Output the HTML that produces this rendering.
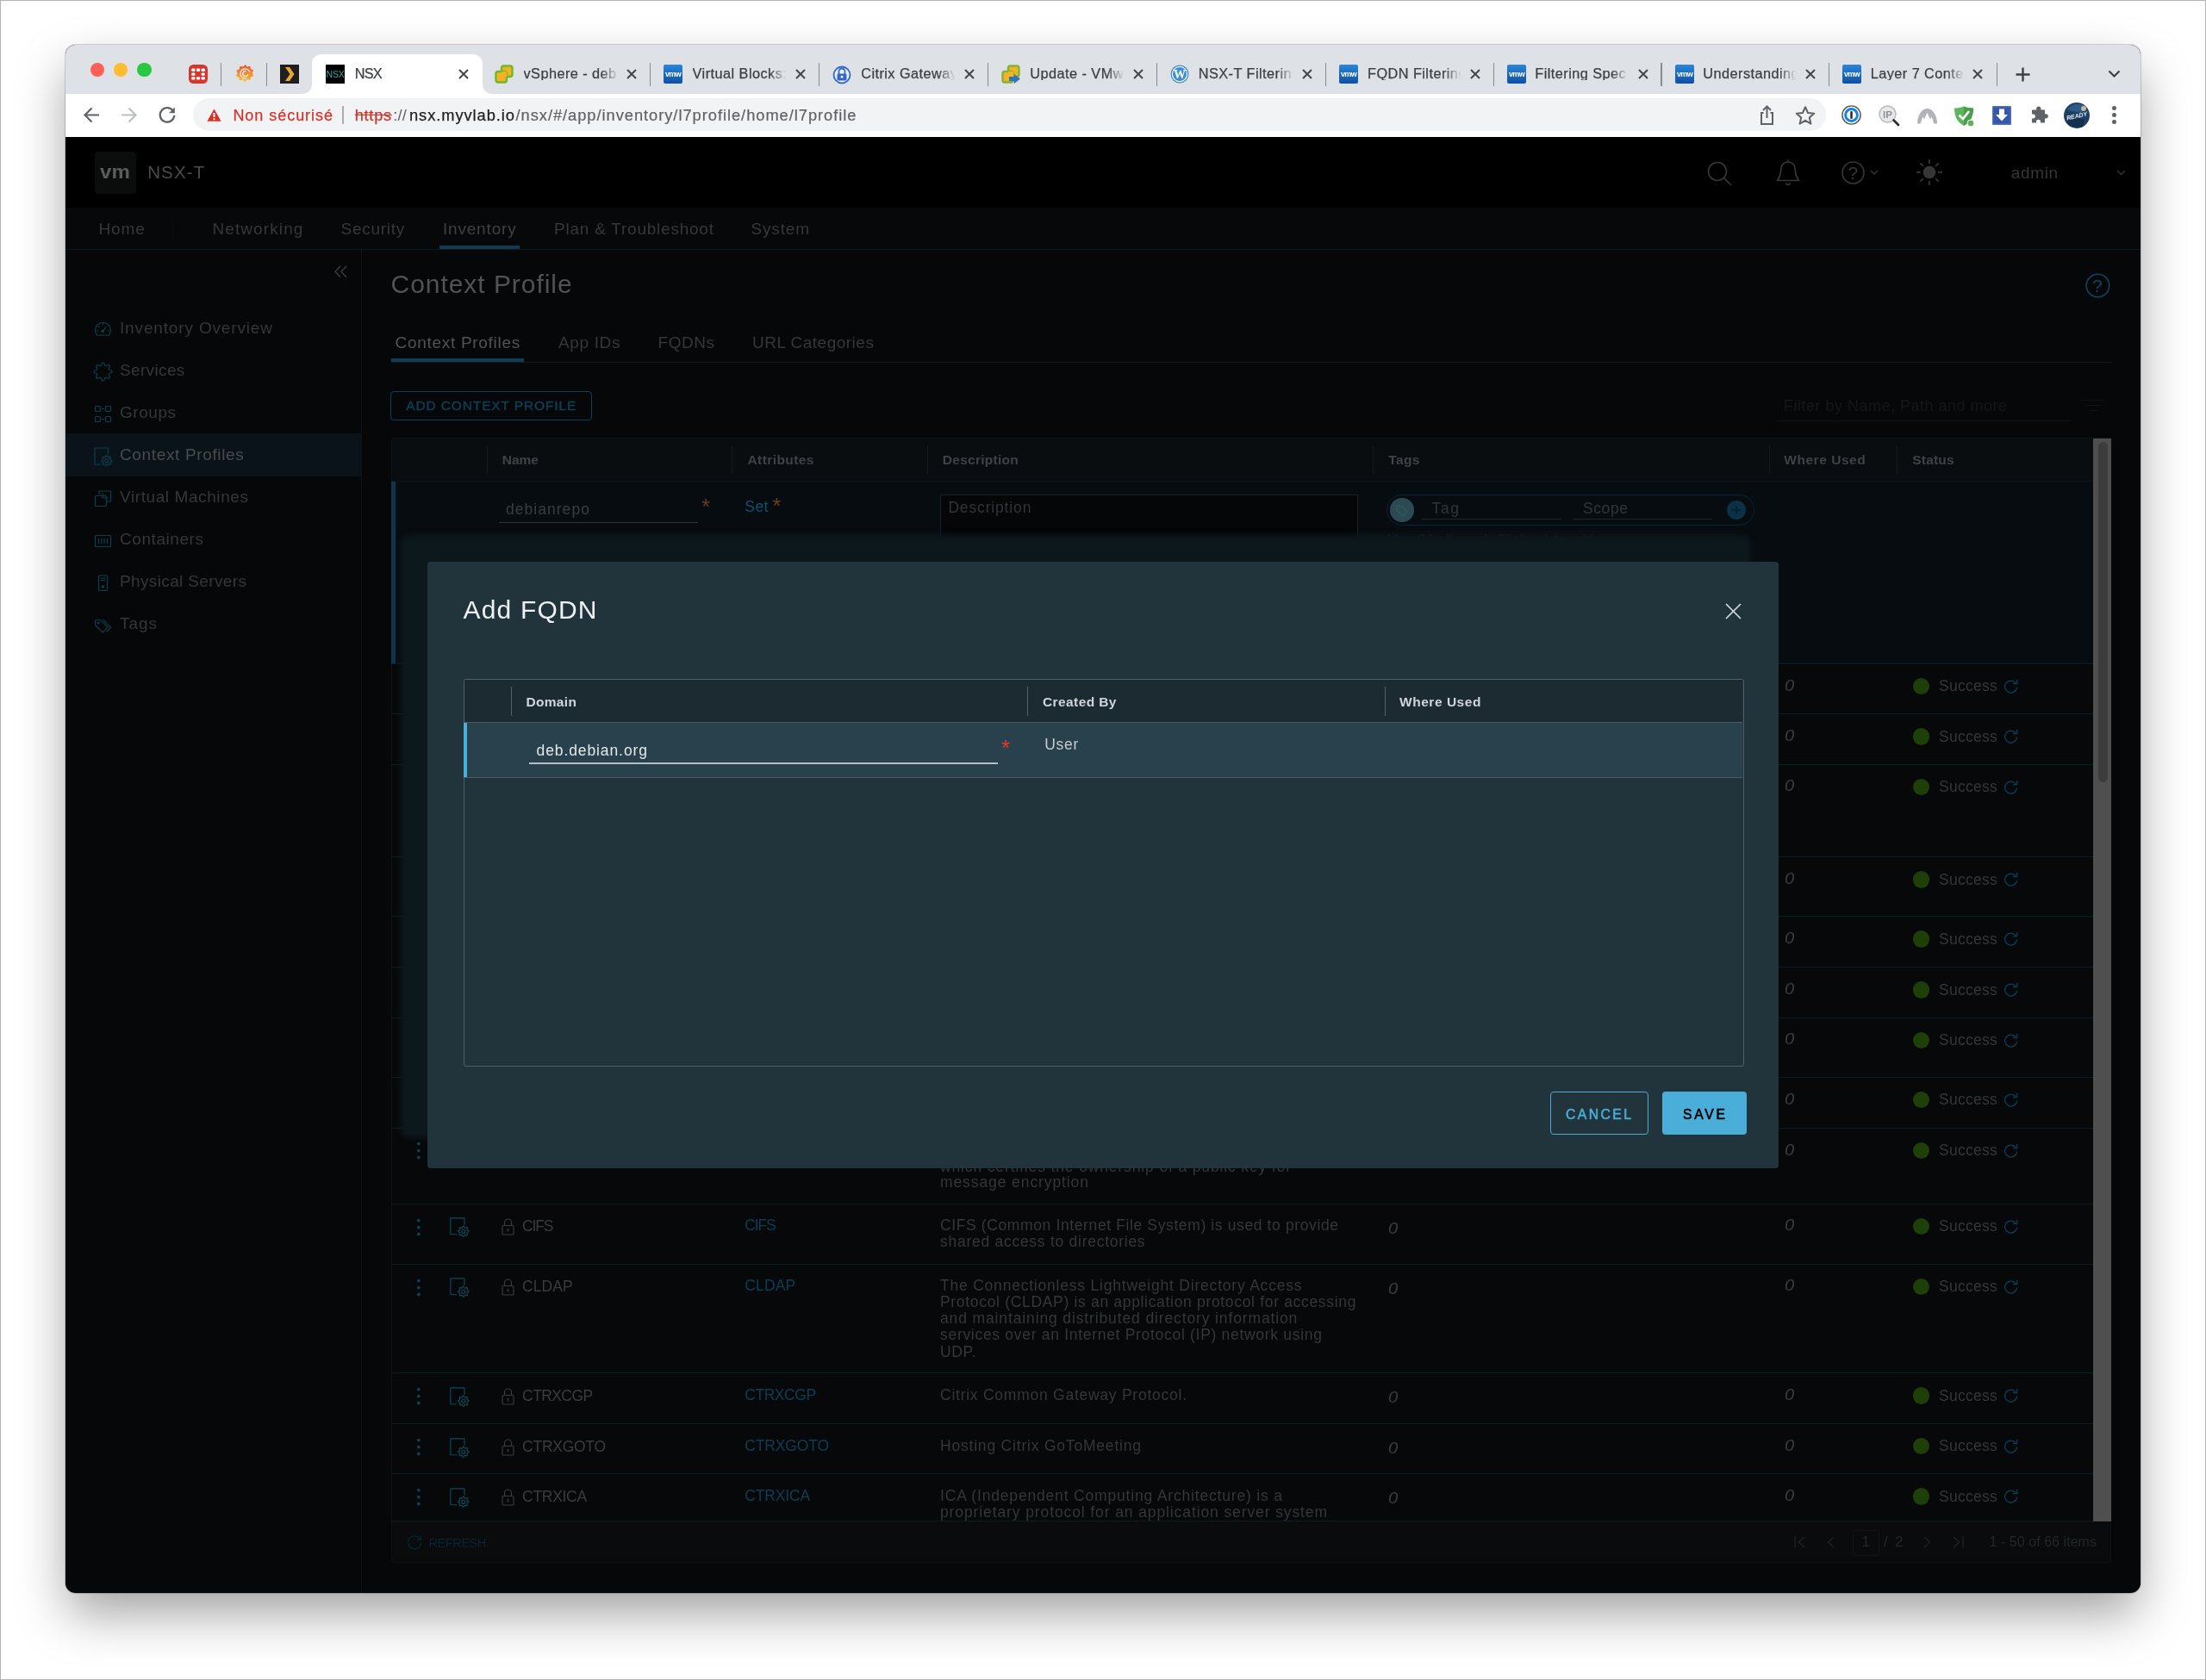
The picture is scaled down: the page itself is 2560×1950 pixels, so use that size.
<!DOCTYPE html><html lang="fr"><head><meta charset="utf-8"><title>NSX</title><style>

html,body{margin:0;padding:0}
body{width:2560px;height:1950px;position:relative;overflow:hidden;background:#fff;font-family:"Liberation Sans",sans-serif}
.a{position:absolute;box-sizing:border-box}
.t{position:absolute;white-space:pre;font-family:"Liberation Sans",sans-serif}
svg{overflow:visible}

</style></head><body>
<div class="a" style="left:0px;top:0px;width:2560px;height:1.3px;background:#b4b4b4;"></div>
<div class="a" style="left:0px;top:1948.6px;width:2560px;height:1.4px;background:#b4b4b4;"></div>
<div class="a" style="left:0px;top:0px;width:1.3px;height:1950px;background:#b4b4b4;"></div>
<div class="a" style="left:2558.5px;top:0px;width:1.5px;height:1950px;background:#b4b4b4;"></div>
<div class="a" style="left:76px;top:52px;width:2408px;height:1797px;border-radius:12px;box-shadow:0 0 0 1px rgba(0,0,0,.16),0 26px 58px -2px rgba(0,0,0,.37);background:#05080a"></div>
<div class="a" style="left:76px;top:52px;width:2408px;height:1797px;border-radius:12px;overflow:hidden">
<div class="a" style="left:-76px;top:-52px;width:2560px;height:1950px;will-change:transform">
<div class="a" style="left:76px;top:52px;width:2408px;height:57px;background:#dee1e6;"></div>
<svg class="a" style="left:350px;top:62px" width="222" height="47" viewBox="0 0 222 47"><path d="M0 47 C7 47 12 43 12 35 V12 C12 5 17 1 24 1 H198 C205 1 210 5 210 12 V35 C210 43 215 47 222 47 Z" fill="#fff"/></svg>
<div class="a" style="left:76px;top:109px;width:2408px;height:50px;background:#fff;"></div>
<div class="a" style="left:223.5px;top:114.3px;width:1895.5px;height:37.7px;background:#f1f3f4;border-radius:18.8px;"></div>
<div class="a" style="left:104.8px;top:72.5px;width:16.4px;height:16.4px;background:#fe5f57;border-radius:50%;"></div>
<div class="a" style="left:131.8px;top:72.5px;width:16.4px;height:16.4px;background:#febc2e;border-radius:50%;"></div>
<div class="a" style="left:159.3px;top:72.5px;width:16.4px;height:16.4px;background:#28c840;border-radius:50%;"></div>
<svg class="a" style="left:219px;top:74.5px;" width="22" height="22" viewBox="0 0 22 22"><rect x="0" y="0" width="22" height="22" rx="5.5" fill="#d8352c"/><g fill="#fff"><rect x="3.2" y="4.6" width="4.2" height="3.3" rx="1"/><rect x="8.9" y="4.6" width="4.2" height="3.3" rx="1"/><rect x="14.6" y="4.6" width="4.2" height="3.3" rx="1"/><rect x="3.2" y="9.4" width="4.2" height="3.3" rx="1"/><rect x="14.6" y="9.4" width="4.2" height="3.3" rx="1"/><rect x="3.2" y="14.2" width="4.2" height="3.3" rx="1"/><rect x="8.9" y="14.2" width="4.2" height="3.3" rx="1"/><rect x="14.6" y="14.2" width="4.2" height="3.3" rx="1"/></g></svg>
<div class="a" style="left:255.8px;top:73px;width:1.4px;height:26.5px;background:#878a8f;"></div>
<svg class="a" style="left:273px;top:74px;" width="22" height="22" viewBox="0 0 22 22"><linearGradient id="gg" x1="0" y1="0" x2="0" y2="1"><stop offset="0" stop-color="#ee4f2c"/><stop offset="1" stop-color="#fbc22b"/></linearGradient><path d="M11.5 1 L13.8 3.6 L17.2 2.6 L17.9 6.1 L21.2 7.6 L19.6 10.8 L21.4 14 L18 15.4 L17.2 19 L13.7 18.3 L11.2 21 L8.6 18.5 L5 19.3 L4.4 15.7 L1 14.2 L2.8 11 L1.2 7.7 L4.6 6.4 L5.5 2.8 L9 3.6 Z" fill="url(#gg)"/><path d="M16.6 9.2 A5.6 5.6 0 1 0 12.6 17 M12.2 8.6 A3 3 0 1 0 14.6 12.6" stroke="#e3e5ea" stroke-width="1.5" fill="none" stroke-linecap="round"/></svg>
<div class="a" style="left:308.8px;top:73px;width:1.4px;height:26.5px;background:#878a8f;"></div>
<svg class="a" style="left:325px;top:74.5px;" width="22" height="22" viewBox="0 0 22 22"><rect width="22" height="22" fill="#1f1f1f"/><path d="M6 3 H11 L16.5 11 L11 19 H6 L11.5 11 Z" fill="#eba72e"/></svg>
<svg class="a" style="left:378px;top:74.7px;" width="22" height="22" viewBox="0 0 22 22"><rect width="22" height="22" fill="#000"/><text x="11" y="15" font-family="Liberation Sans, sans-serif" font-size="10.5" fill="#3aa3ad" text-anchor="middle" letter-spacing="-0.2">NSX</text></svg>
<span class="t" style="left:411.70px;top:77.00px;font-size:16.3px;line-height:16.3px;color:#3c4043;letter-spacing:-0.742px;-webkit-text-stroke:0.25px #3c4043;">NSX</span>
<svg class="a" style="left:531.6px;top:79.9px;" width="12" height="12" viewBox="0 0 12 12"><path d="M1 1 L11 11 M11 1 L1 11" stroke="#44474a" stroke-width="2" fill="none"/></svg>
<svg class="a" style="left:574.1px;top:74.7px;" width="22" height="22" viewBox="0 0 22 22"><rect x="8" y="1.5" width="12.5" height="12.5" rx="2.5" fill="#f5b324" stroke="#72b62b" stroke-width="2.4"/><rect x="1.5" y="8" width="12.5" height="12.5" rx="2.5" fill="#f5b324" stroke="#72b62b" stroke-width="2.4"/><rect x="8" y="8" width="6" height="6" fill="#f5b324"/></svg>
<span class="t" style="left:607.50px;top:77.00px;font-size:16.3px;line-height:16.3px;color:#3c4043;letter-spacing:0.450px;-webkit-text-stroke:0.25px #3c4043;width:111.9px;overflow:hidden;-webkit-mask-image:linear-gradient(90deg,#000 0,#000 89.9px,transparent 109.9px);mask-image:linear-gradient(90deg,#000 0,#000 89.9px,transparent 109.9px);">vSphere - deb</span>
<svg class="a" style="left:727.4px;top:79.9px;" width="12" height="12" viewBox="0 0 12 12"><path d="M1 1 L11 11 M11 1 L1 11" stroke="#44474a" stroke-width="2" fill="none"/></svg>
<svg class="a" style="left:770.0px;top:74.7px;" width="22" height="22" viewBox="0 0 22 22"><linearGradient id="g770" x1="0" y1="0" x2="0" y2="1"><stop offset="0" stop-color="#2a86d8"/><stop offset="1" stop-color="#0d4fa6"/></linearGradient><rect width="22" height="22" rx="2" fill="url(#g770)"/><text x="11" y="14" font-family="Liberation Sans, sans-serif" font-size="9" font-weight="700" fill="#fff" text-anchor="middle" letter-spacing="-0.6">vmw</text></svg>
<span class="t" style="left:803.60px;top:77.00px;font-size:16.3px;line-height:16.3px;color:#3c4043;letter-spacing:0.450px;-webkit-text-stroke:0.25px #3c4043;width:111.4px;overflow:hidden;-webkit-mask-image:linear-gradient(90deg,#000 0,#000 89.4px,transparent 109.4px);mask-image:linear-gradient(90deg,#000 0,#000 89.4px,transparent 109.4px);">Virtual Blocks:</span>
<svg class="a" style="left:923.0px;top:79.9px;" width="12" height="12" viewBox="0 0 12 12"><path d="M1 1 L11 11 M11 1 L1 11" stroke="#44474a" stroke-width="2" fill="none"/></svg>
<svg class="a" style="left:966.0px;top:74.7px;" width="22" height="22" viewBox="0 0 22 22"><circle cx="11" cy="12" r="9.5" fill="#e9eefb" stroke="#3567c4" stroke-width="1.8"/><path d="M7.5 11 V8 A3.5 3.5 0 0 1 14.5 8 V11" stroke="#3567c4" stroke-width="1.8" fill="none"/><rect x="5.5" y="10.5" width="11" height="8" rx="1.5" fill="#3567c4"/><circle cx="11" cy="14.2" r="1.4" fill="#fff"/></svg>
<span class="t" style="left:999.20px;top:77.00px;font-size:16.3px;line-height:16.3px;color:#3c4043;letter-spacing:0.450px;-webkit-text-stroke:0.25px #3c4043;width:111.8px;overflow:hidden;-webkit-mask-image:linear-gradient(90deg,#000 0,#000 89.8px,transparent 109.8px);mask-image:linear-gradient(90deg,#000 0,#000 89.8px,transparent 109.8px);">Citrix Gateway</span>
<svg class="a" style="left:1119.0px;top:79.9px;" width="12" height="12" viewBox="0 0 12 12"><path d="M1 1 L11 11 M11 1 L1 11" stroke="#44474a" stroke-width="2" fill="none"/></svg>
<svg class="a" style="left:1162.1px;top:74.7px;" width="22" height="22" viewBox="0 0 22 22"><rect x="8" y="1.5" width="12.5" height="12.5" rx="2.5" fill="#f5b324" stroke="#7db53a" stroke-width="2.4"/><rect x="1.5" y="8" width="12.5" height="12.5" rx="2.5" fill="#f5b324" stroke="#7db53a" stroke-width="2.4"/><rect x="8" y="8" width="6" height="6" fill="#f5b324"/><path d="M9 14 H15 V11 L22 16.5 L15 22 V19 H9 Z" fill="#2f74c0"/></svg>
<span class="t" style="left:1195.30px;top:77.00px;font-size:16.3px;line-height:16.3px;color:#3c4043;letter-spacing:0.450px;-webkit-text-stroke:0.25px #3c4043;width:111.9px;overflow:hidden;-webkit-mask-image:linear-gradient(90deg,#000 0,#000 89.9px,transparent 109.9px);mask-image:linear-gradient(90deg,#000 0,#000 89.9px,transparent 109.9px);">Update - VMw</span>
<svg class="a" style="left:1315.2px;top:79.9px;" width="12" height="12" viewBox="0 0 12 12"><path d="M1 1 L11 11 M11 1 L1 11" stroke="#44474a" stroke-width="2" fill="none"/></svg>
<svg class="a" style="left:1358.2px;top:74.7px;" width="22" height="22" viewBox="0 0 22 22"><circle cx="11" cy="11" r="10.5" fill="#3d8fcb"/><circle cx="11" cy="11" r="8.6" fill="none" stroke="#fff" stroke-width="1.2"/><text x="11" y="16" font-family="Liberation Serif, serif" font-size="14" font-weight="700" fill="#fff" text-anchor="middle">W</text></svg>
<span class="t" style="left:1390.80px;top:77.00px;font-size:16.3px;line-height:16.3px;color:#3c4043;letter-spacing:0.450px;-webkit-text-stroke:0.25px #3c4043;width:112.5px;overflow:hidden;-webkit-mask-image:linear-gradient(90deg,#000 0,#000 90.5px,transparent 110.5px);mask-image:linear-gradient(90deg,#000 0,#000 90.5px,transparent 110.5px);">NSX-T Filterin</span>
<svg class="a" style="left:1511.3px;top:79.9px;" width="12" height="12" viewBox="0 0 12 12"><path d="M1 1 L11 11 M11 1 L1 11" stroke="#44474a" stroke-width="2" fill="none"/></svg>
<svg class="a" style="left:1554.3px;top:74.7px;" width="22" height="22" viewBox="0 0 22 22"><linearGradient id="g1554" x1="0" y1="0" x2="0" y2="1"><stop offset="0" stop-color="#2a86d8"/><stop offset="1" stop-color="#0d4fa6"/></linearGradient><rect width="22" height="22" rx="2" fill="url(#g1554)"/><text x="11" y="14" font-family="Liberation Sans, sans-serif" font-size="9" font-weight="700" fill="#fff" text-anchor="middle" letter-spacing="-0.6">vmw</text></svg>
<span class="t" style="left:1587.00px;top:77.00px;font-size:16.3px;line-height:16.3px;color:#3c4043;letter-spacing:0.450px;-webkit-text-stroke:0.25px #3c4043;width:110.7px;overflow:hidden;-webkit-mask-image:linear-gradient(90deg,#000 0,#000 88.7px,transparent 108.7px);mask-image:linear-gradient(90deg,#000 0,#000 88.7px,transparent 108.7px);">FQDN Filtering</span>
<svg class="a" style="left:1705.7px;top:79.9px;" width="12" height="12" viewBox="0 0 12 12"><path d="M1 1 L11 11 M11 1 L1 11" stroke="#44474a" stroke-width="2" fill="none"/></svg>
<svg class="a" style="left:1748.7px;top:74.7px;" width="22" height="22" viewBox="0 0 22 22"><linearGradient id="g1748" x1="0" y1="0" x2="0" y2="1"><stop offset="0" stop-color="#2a86d8"/><stop offset="1" stop-color="#0d4fa6"/></linearGradient><rect width="22" height="22" rx="2" fill="url(#g1748)"/><text x="11" y="14" font-family="Liberation Sans, sans-serif" font-size="9" font-weight="700" fill="#fff" text-anchor="middle" letter-spacing="-0.6">vmw</text></svg>
<span class="t" style="left:1781.30px;top:77.00px;font-size:16.3px;line-height:16.3px;color:#3c4043;letter-spacing:0.450px;-webkit-text-stroke:0.25px #3c4043;width:111.4px;overflow:hidden;-webkit-mask-image:linear-gradient(90deg,#000 0,#000 89.4px,transparent 109.4px);mask-image:linear-gradient(90deg,#000 0,#000 89.4px,transparent 109.4px);">Filtering Spec</span>
<svg class="a" style="left:1900.7px;top:79.9px;" width="12" height="12" viewBox="0 0 12 12"><path d="M1 1 L11 11 M11 1 L1 11" stroke="#44474a" stroke-width="2" fill="none"/></svg>
<svg class="a" style="left:1943.6px;top:74.7px;" width="22" height="22" viewBox="0 0 22 22"><linearGradient id="g1943" x1="0" y1="0" x2="0" y2="1"><stop offset="0" stop-color="#2a86d8"/><stop offset="1" stop-color="#0d4fa6"/></linearGradient><rect width="22" height="22" rx="2" fill="url(#g1943)"/><text x="11" y="14" font-family="Liberation Sans, sans-serif" font-size="9" font-weight="700" fill="#fff" text-anchor="middle" letter-spacing="-0.6">vmw</text></svg>
<span class="t" style="left:1976.30px;top:77.00px;font-size:16.3px;line-height:16.3px;color:#3c4043;letter-spacing:0.450px;-webkit-text-stroke:0.25px #3c4043;width:110.7px;overflow:hidden;-webkit-mask-image:linear-gradient(90deg,#000 0,#000 88.7px,transparent 108.7px);mask-image:linear-gradient(90deg,#000 0,#000 88.7px,transparent 108.7px);">Understanding</span>
<svg class="a" style="left:2095.0px;top:79.9px;" width="12" height="12" viewBox="0 0 12 12"><path d="M1 1 L11 11 M11 1 L1 11" stroke="#44474a" stroke-width="2" fill="none"/></svg>
<svg class="a" style="left:2138.0px;top:74.7px;" width="22" height="22" viewBox="0 0 22 22"><linearGradient id="g2138" x1="0" y1="0" x2="0" y2="1"><stop offset="0" stop-color="#2a86d8"/><stop offset="1" stop-color="#0d4fa6"/></linearGradient><rect width="22" height="22" rx="2" fill="url(#g2138)"/><text x="11" y="14" font-family="Liberation Sans, sans-serif" font-size="9" font-weight="700" fill="#fff" text-anchor="middle" letter-spacing="-0.6">vmw</text></svg>
<span class="t" style="left:2170.70px;top:77.00px;font-size:16.3px;line-height:16.3px;color:#3c4043;letter-spacing:0.450px;-webkit-text-stroke:0.25px #3c4043;width:110.7px;overflow:hidden;-webkit-mask-image:linear-gradient(90deg,#000 0,#000 88.7px,transparent 108.7px);mask-image:linear-gradient(90deg,#000 0,#000 88.7px,transparent 108.7px);">Layer 7 Conte</span>
<svg class="a" style="left:2289.4px;top:79.9px;" width="12" height="12" viewBox="0 0 12 12"><path d="M1 1 L11 11 M11 1 L1 11" stroke="#44474a" stroke-width="2" fill="none"/></svg>
<div class="a" style="left:753.8px;top:73px;width:1.4px;height:26.5px;background:#878a8f;"></div>
<div class="a" style="left:949.8px;top:73px;width:1.4px;height:26.5px;background:#878a8f;"></div>
<div class="a" style="left:1145.8999999999999px;top:73px;width:1.4px;height:26.5px;background:#878a8f;"></div>
<div class="a" style="left:1342.0px;top:73px;width:1.4px;height:26.5px;background:#878a8f;"></div>
<div class="a" style="left:1538.1px;top:73px;width:1.4px;height:26.5px;background:#878a8f;"></div>
<div class="a" style="left:1732.5px;top:73px;width:1.4px;height:26.5px;background:#878a8f;"></div>
<div class="a" style="left:1927.3999999999999px;top:73px;width:1.4px;height:26.5px;background:#878a8f;"></div>
<div class="a" style="left:2121.8px;top:73px;width:1.4px;height:26.5px;background:#878a8f;"></div>
<div class="a" style="left:2316.5px;top:73px;width:1.4px;height:26.5px;background:#878a8f;"></div>
<svg class="a" style="left:2339px;top:77.5px;" width="17" height="17" viewBox="0 0 17 17"><path d="M8.5 0.5 V16.5 M0.5 8.5 H16.5" stroke="#3c4043" stroke-width="2.4" fill="none"/></svg>
<svg class="a" style="left:2446px;top:81px;" width="15" height="10" viewBox="0 0 15 10"><path d="M1.5 1.5 L7.5 7.5 L13.5 1.5" stroke="#3c4043" stroke-width="2.2" fill="none"/></svg>
<svg class="a" style="left:96px;top:123px;" width="21" height="21" viewBox="0 0 21 21"><path d="M19 10.5 H3 M10.5 2.5 L2.5 10.5 L10.5 18.5" stroke="#5f6368" stroke-width="2.2" fill="none" stroke-linejoin="miter"/></svg>
<svg class="a" style="left:138.6px;top:123px;" width="21" height="21" viewBox="0 0 21 21"><path d="M2 10.5 H18 M10.5 2.5 L18.5 10.5 L10.5 18.5" stroke="#bcc0c4" stroke-width="2.2" fill="none"/></svg>
<svg class="a" style="left:182.5px;top:122.5px;" width="22" height="22" viewBox="0 0 22 22"><path d="M18.2 6.2 A8.3 8.3 0 1 0 19.3 11" stroke="#5f6368" stroke-width="2.3" fill="none"/><path d="M19.8 1.5 V8.3 H13 Z" fill="#5f6368"/></svg>
<svg class="a" style="left:240px;top:126px;" width="17" height="15" viewBox="0 0 17 15"><path d="M8.5 0.5 L16.6 14.7 H0.4 Z" fill="#d93025"/><path d="M8.5 5 V10" stroke="#fff" stroke-width="2"/><circle cx="8.5" cy="12.3" r="1.1" fill="#fff"/></svg>
<span class="t" style="left:270.40px;top:125.00px;font-size:18px;line-height:18px;color:#d3352b;letter-spacing:0.959px;-webkit-text-stroke:0.25px #d3352b;">Non sécurisé</span>
<div class="a" style="left:397.4px;top:122.5px;width:1.3px;height:21.5px;background:#a9adb2;"></div>
<span class="t" style="left:411.70px;top:125.00px;font-size:18.3px;line-height:18.3px;color:#d3352b;letter-spacing:0.715px;text-decoration:line-through;-webkit-text-stroke:0.25px #d3352b;">https</span>
<span class="t" style="left:456.30px;top:125.00px;font-size:18.3px;line-height:18.3px;color:#5f6368;letter-spacing:0.200px;">://</span>
<span class="t" style="left:475.00px;top:125.00px;font-size:18.3px;line-height:18.3px;color:#202124;letter-spacing:0.938px;-webkit-text-stroke:0.25px #202124;">nsx.myvlab.io</span>
<span class="t" style="left:598.50px;top:125.00px;font-size:18.3px;line-height:18.3px;color:#5f6368;letter-spacing:0.963px;-webkit-text-stroke:0.2px #5f6368;">/nsx/#/app/inventory/l7profile/home/l7profile</span>
<svg class="a" style="left:2041px;top:121px;" width="19" height="25" viewBox="0 0 19 25"><path d="M5.5 10 H3 V23 H16 V10 H13.5" stroke="#5f6368" stroke-width="2" fill="none"/><path d="M9.5 16 V3 M5 7 L9.5 2.5 L14 7" stroke="#5f6368" stroke-width="2" fill="none"/></svg>
<svg class="a" style="left:2083px;top:121.5px;" width="24" height="23" viewBox="0 0 24 23"><path d="M12 2.2 L15 9 L22.2 9.7 L16.8 14.5 L18.4 21.6 L12 17.8 L5.6 21.6 L7.2 14.5 L1.8 9.7 L9 9 Z" stroke="#5f6368" stroke-width="2" fill="none" stroke-linejoin="round"/></svg>
<svg class="a" style="left:2137px;top:122px;" width="23" height="23" viewBox="0 0 23 23"><circle cx="11.5" cy="11.5" r="10.6" fill="#fff" stroke="#4d5257" stroke-width="1.4"/><circle cx="11.5" cy="11.5" r="6.9" fill="#fff" stroke="#1883e0" stroke-width="3"/><rect x="10.2" y="7" width="2.6" height="9" rx="1.1" fill="#2a2e33"/></svg>
<svg class="a" style="left:2180px;top:122px;" width="26" height="26" viewBox="0 0 26 26"><circle cx="10.5" cy="10.5" r="9.5" fill="#e8e8ea" stroke="#b7b9bd" stroke-width="1.5"/><text x="10.5" y="15" font-family="Liberation Sans, sans-serif" font-size="11.5" font-weight="700" fill="#8d9095" text-anchor="middle">IP</text><path d="M17.5 17.5 L23 23" stroke="#2b2b2b" stroke-width="2.6" stroke-linecap="round"/></svg>
<svg class="a" style="left:2224px;top:124px;" width="25" height="20" viewBox="0 0 25 20"><path d="M1 19.5 A11.5 17.5 0 0 1 24 19.5 L20.3 19.5 L17.6 11.5 L15.9 14.2 L12.5 6.8 L9.1 14.2 L7.4 11.5 L4.7 19.5 Z" fill="#b1b4b9"/></svg>
<svg class="a" style="left:2267px;top:121.5px;" width="25" height="26" viewBox="0 0 25 26"><path d="M12 1.5 C15.5 3 19.5 3.6 23 3.6 C23 12 20.5 19.5 12 24 C3.5 19.5 1 12 1 3.6 C4.5 3.6 8.5 3 12 1.5 Z" fill="#5eb55f"/><path d="M12 1.5 C15.5 3 19.5 3.6 23 3.6 C23 12 20.5 19.5 12 24 Z" fill="#46a049"/><path d="M6.5 11.5 L11 16 L18 7" stroke="#fff" stroke-width="2.6" fill="none"/><circle cx="20" cy="21" r="4" fill="#67ad5b" stroke="#fff" stroke-width="1"/></svg>
<svg class="a" style="left:2312px;top:122.5px;" width="22" height="22" viewBox="0 0 22 22"><rect width="22" height="22" rx="1.5" fill="#3558a8"/><rect x="0.8" y="0.8" width="20.4" height="20.4" fill="none" stroke="#5c7cc4" stroke-width="1"/><path d="M8 3.5 H14 V10 H18 L11 17.5 L4 10 H8 Z" fill="#fff"/></svg>
<svg class="a" style="left:2355px;top:122px;" width="23" height="23" viewBox="0 0 23 23"><path d="M8.2 4.2 A2.6 2.6 0 0 1 13.4 4.2 V5.6 H18 V10.2 H19.2 A2.6 2.6 0 0 1 19.2 15.4 H18 V20.6 H13 V19.2 A2.5 2.5 0 0 0 8 19.2 V20.6 H3 V15.6 H4.4 A2.5 2.5 0 0 0 4.4 10.6 H3 V5.6 H8.2 Z" fill="#5f6368"/></svg>
<svg class="a" style="left:2395px;top:118.5px;" width="30" height="30" viewBox="0 0 30 30"><circle cx="15" cy="15" r="15" fill="#1d3f63"/><path d="M4 8 A15 15 0 0 1 26 5 L20 12 L10 10 Z" fill="#2c5a86"/><path d="M3 22 L12 16 L24 20 L22 28 A15 15 0 0 1 3 22 Z" fill="#15304f"/><text x="15" y="18" font-family="Liberation Sans, sans-serif" font-size="7" font-style="italic" font-weight="700" fill="#dfe7f2" text-anchor="middle" transform="rotate(-12 15 15)">READY</text><circle cx="23" cy="7" r="3" fill="#c9b59a"/></svg>
<div class="a" style="left:2451.0px;top:123.0px;width:4.6px;height:4.6px;background:#5f6368;border-radius:50%;"></div>
<div class="a" style="left:2451.0px;top:131.2px;width:4.6px;height:4.6px;background:#5f6368;border-radius:50%;"></div>
<div class="a" style="left:2451.0px;top:139.39999999999998px;width:4.6px;height:4.6px;background:#5f6368;border-radius:50%;"></div>
<div class="a" style="left:76px;top:159px;width:2408px;height:1689px;background:#060709;"></div>
<div class="a" style="left:76px;top:159px;width:2408px;height:82px;background:#000;"></div>
<div class="a" style="left:109.5px;top:175.5px;width:48.5px;height:49px;background:#0b0d0c;border-radius:4px;"></div>
<span class="t" style="left:115.70px;top:189.00px;font-size:22.5px;line-height:22.5px;color:#5c5c5c;font-weight:700;transform:scaleX(1.07);transform-origin:left;">vm</span>
<span class="t" style="left:171.20px;top:190.00px;font-size:20.5px;line-height:20.5px;color:#4b4b4b;letter-spacing:1.125px;">NSX-T</span>
<svg class="a" style="left:1980px;top:186px;" width="32" height="32" viewBox="0 0 32 32"><circle cx="13" cy="13" r="10.5" stroke="#363636" stroke-width="1.7" fill="none"/><path d="M21 21 L29 29" stroke="#363636" stroke-width="1.7"/></svg>
<svg class="a" style="left:2061px;top:185px;" width="28" height="32" viewBox="0 0 28 32"><path d="M14 3 C8 3 5.5 8 5.5 14 C5.5 19 3.5 21.5 1.5 24.5 H26.5 C24.5 21.5 22.5 19 22.5 14 C22.5 8 20 3 14 3 Z" stroke="#363636" stroke-width="1.7" fill="none"/><path d="M14 0.5 V3 M11.5 27.5 A2.6 2.6 0 0 0 16.5 27.5" stroke="#363636" stroke-width="1.7" fill="none"/></svg>
<svg class="a" style="left:2137px;top:187px;" width="27" height="27" viewBox="0 0 27 27"><circle cx="13.5" cy="13.5" r="12.5" stroke="#363636" stroke-width="1.6" fill="none"/></svg>
<span class="t" style="left:2144.50px;top:190.00px;font-size:21px;line-height:21px;color:#363636;">?</span>
<svg class="a" style="left:2169.5px;top:197px;" width="10" height="6" viewBox="0 0 10 6"><path d="M1 1 L5 5 L9 1" stroke="#363636" stroke-width="1.4" fill="none"/></svg>
<svg class="a" style="left:2222.6px;top:184px;" width="32" height="32" viewBox="0 0 32 32"><circle cx="16" cy="16" r="7.3" fill="#363636"/><path d="M16 1 V6" stroke="#363636" stroke-width="1.8" transform="rotate(0 16 16)"/><path d="M16 1 V6" stroke="#363636" stroke-width="1.8" transform="rotate(45 16 16)"/><path d="M16 1 V6" stroke="#363636" stroke-width="1.8" transform="rotate(90 16 16)"/><path d="M16 1 V6" stroke="#363636" stroke-width="1.8" transform="rotate(135 16 16)"/><path d="M16 1 V6" stroke="#363636" stroke-width="1.8" transform="rotate(180 16 16)"/><path d="M16 1 V6" stroke="#363636" stroke-width="1.8" transform="rotate(225 16 16)"/><path d="M16 1 V6" stroke="#363636" stroke-width="1.8" transform="rotate(270 16 16)"/><path d="M16 1 V6" stroke="#363636" stroke-width="1.8" transform="rotate(315 16 16)"/></svg>
<span class="t" style="left:2333.70px;top:191.00px;font-size:19px;line-height:19px;color:#363636;letter-spacing:0.688px;">admin</span>
<svg class="a" style="left:2455.5px;top:197px;" width="11" height="6.5" viewBox="0 0 11 6.5"><path d="M1 1 L5.5 5.5 L10 1" stroke="#363636" stroke-width="1.4" fill="none"/></svg>
<div class="a" style="left:76px;top:240.8px;width:2408px;height:48.5px;background:#06080a;"></div>
<div class="a" style="left:76px;top:288.8px;width:2408px;height:1px;background:#0b1a20;"></div>
<span class="t" style="left:114.50px;top:256.00px;font-size:19px;line-height:19px;color:#34393c;letter-spacing:0.871px;">Home</span>
<div class="a" style="left:200px;top:256px;width:1px;height:22px;background:#0b0e10;"></div>
<span class="t" style="left:246.40px;top:256.00px;font-size:19px;line-height:19px;color:#34393c;letter-spacing:1.106px;">Networking</span>
<span class="t" style="left:395.60px;top:256.00px;font-size:19px;line-height:19px;color:#34393c;letter-spacing:0.708px;">Security</span>
<span class="t" style="left:513.90px;top:256.00px;font-size:19px;line-height:19px;color:#3d4245;letter-spacing:0.830px;">Inventory</span>
<div class="a" style="left:509.6px;top:284.8px;width:93.8px;height:4.6px;background:#12394f;"></div>
<span class="t" style="left:643.00px;top:256.00px;font-size:19px;line-height:19px;color:#34393c;letter-spacing:0.771px;">Plan &amp; Troubleshoot</span>
<span class="t" style="left:871.50px;top:256.00px;font-size:19px;line-height:19px;color:#34393c;letter-spacing:0.828px;">System</span>
<div class="a" style="left:419px;top:289.5px;width:1px;height:1559px;background:#0c1216;"></div>
<div class="a" style="left:76px;top:503.3px;width:343px;height:49.3px;background:#0a131a;"></div>
<svg class="a" style="left:387.6px;top:307.5px;" width="15" height="14.5" viewBox="0 0 15 14.5"><path d="M7 0.7 L1 7.2 L7 13.8 M14 0.7 L8 7.2 L14 13.8" stroke="#3a4044" stroke-width="1.3" fill="none"/></svg>
<span class="t" style="left:139.00px;top:371.00px;font-size:19px;line-height:19px;color:#33383b;letter-spacing:0.846px;">Inventory Overview</span>
<span class="t" style="left:139.00px;top:420.00px;font-size:19px;line-height:19px;color:#33383b;letter-spacing:0.349px;">Services</span>
<span class="t" style="left:139.00px;top:469.00px;font-size:19px;line-height:19px;color:#33383b;letter-spacing:0.537px;">Groups</span>
<span class="t" style="left:139.00px;top:518.00px;font-size:19px;line-height:19px;color:#484c4f;letter-spacing:0.645px;">Context Profiles</span>
<span class="t" style="left:139.00px;top:567.00px;font-size:19px;line-height:19px;color:#33383b;letter-spacing:0.593px;">Virtual Machines</span>
<span class="t" style="left:139.00px;top:616.00px;font-size:19px;line-height:19px;color:#33383b;letter-spacing:0.568px;">Containers</span>
<span class="t" style="left:139.00px;top:665.00px;font-size:19px;line-height:19px;color:#33383b;letter-spacing:0.367px;">Physical Servers</span>
<span class="t" style="left:139.00px;top:714.00px;font-size:19px;line-height:19px;color:#33383b;letter-spacing:0.953px;">Tags</span>
<svg class="a" style="left:109px;top:372.0px;" width="21" height="21" viewBox="0 0 21 21"><g stroke="#0e3e4b" stroke-width="1.2" fill="none"><path d="M3.5 17 A9 9 0 1 1 17.5 17 Z"/><path d="M10.5 12 L14.5 7"/><circle cx="10.2" cy="12.3" r="1.3" fill="#0e3e4b"/><path d="M10.5 3 V5 M3 12 H5 M16 12 H18 M5 6.5 L6.3 7.8"/></g></svg>
<svg class="a" style="left:109px;top:421.0px;" width="21" height="21" viewBox="0 0 21 21"><g stroke="#0e3e4b" stroke-width="1.2" fill="none"><path stroke-linejoin="round" d="M20.85 9.48 L20.85 11.52 L17.77 12.71 L17.20 14.08 L18.54 17.10 L17.10 18.54 L14.08 17.20 L12.71 17.77 L11.52 20.85 L9.48 20.85 L8.29 17.77 L6.92 17.20 L3.90 18.54 L2.46 17.10 L3.80 14.08 L3.23 12.71 L0.15 11.52 L0.15 9.48 L3.23 8.29 L3.80 6.92 L2.46 3.90 L3.90 2.46 L6.92 3.80 L8.29 3.23 L9.48 0.15 L11.52 0.15 L12.71 3.23 L14.08 3.80 L17.10 2.46 L18.54 3.90 L17.20 6.92 L17.77 8.29 Z"/></g></svg>
<svg class="a" style="left:109px;top:470.0px;" width="21" height="21" viewBox="0 0 21 21"><g stroke="#0e3e4b" stroke-width="1.2" fill="none"><rect x="1.5" y="1.5" width="6" height="6" rx="1"/><rect x="13.5" y="1.5" width="6" height="6" rx="1"/><rect x="1.5" y="13.5" width="6" height="6" rx="1"/><rect x="13.5" y="13.5" width="6" height="6" rx="1"/><path d="M9 4.5 H12 M9 16.5 H12"/></g></svg>
<svg class="a" style="left:109px;top:519.0px;" width="21" height="21" viewBox="0 0 21 21"><g stroke="#0e3e4b" stroke-width="1.2" fill="none"><path d="M16.5 8 V1 H1 V20 H8"/><path stroke-linejoin="round" d="M20.77 15.21 L20.77 16.39 L19.01 17.08 L18.68 17.87 L19.44 19.61 L18.61 20.44 L16.87 19.68 L16.08 20.01 L15.39 21.77 L14.21 21.77 L13.52 20.01 L12.73 19.68 L10.99 20.44 L10.16 19.61 L10.92 17.87 L10.59 17.08 L8.83 16.39 L8.83 15.21 L10.59 14.52 L10.92 13.73 L10.16 11.99 L10.99 11.16 L12.73 11.92 L13.52 11.59 L14.21 9.83 L15.39 9.83 L16.08 11.59 L16.87 11.92 L18.61 11.16 L19.44 11.99 L18.68 13.73 L19.01 14.52 Z"/><circle cx="14.8" cy="15.8" r="1.9"/></g></svg>
<svg class="a" style="left:109px;top:568.0px;" width="21" height="21" viewBox="0 0 21 21"><g stroke="#0e3e4b" stroke-width="1.2" fill="none"><path d="M6 6 V2 H19.5 V14 H15"/><rect x="1.5" y="7.5" width="13" height="12" rx="1"/><path d="M10 4.5 V10 H17"/></g></svg>
<svg class="a" style="left:109px;top:617.0px;" width="21" height="21" viewBox="0 0 21 21"><g stroke="#0e3e4b" stroke-width="1.2" fill="none"><rect x="1.5" y="4.5" width="18" height="13" rx="1"/><path d="M5.5 8 V14 M8.8 8 V14 M12.1 8 V14 M15.4 8 V14"/></g></svg>
<svg class="a" style="left:109px;top:666.0px;" width="21" height="21" viewBox="0 0 21 21"><g stroke="#0e3e4b" stroke-width="1.2" fill="none"><rect x="5.5" y="2" width="10" height="17.5" rx="1"/><path d="M7.5 5 H13.5 M7.5 7.5 H13.5"/><circle cx="10.5" cy="15" r="1.1" fill="#0e3e4b"/></g></svg>
<svg class="a" style="left:109px;top:715.0px;" width="21" height="21" viewBox="0 0 21 21"><g stroke="#0e3e4b" stroke-width="1.2" fill="none"><path d="M1.5 5 V10.5 L10 19 L16 13 L7.5 4.5 Z"/><path d="M10.5 4.5 L19.5 13.5 L14.5 18.5"/><circle cx="5" cy="8" r="1" fill="#0e3e4b"/></g></svg>
<span class="t" style="left:453.60px;top:315.00px;font-size:30px;line-height:30px;color:#4f5355;letter-spacing:0.945px;">Context Profile</span>
<svg class="a" style="left:2420px;top:317px;" width="29" height="29" viewBox="0 0 29 29"><circle cx="14.5" cy="14.5" r="13.3" stroke="#0e4660" stroke-width="1.5" fill="none"/></svg>
<span class="t" style="left:2428.00px;top:321.00px;font-size:21px;line-height:21px;color:#0e4660;">?</span>
<div class="a" style="left:454px;top:419.5px;width:1997px;height:1px;background:#11171a;"></div>
<span class="t" style="left:458.50px;top:388.00px;font-size:19px;line-height:19px;color:#505457;letter-spacing:0.705px;">Context Profiles</span>
<div class="a" style="left:454.4px;top:415.6px;width:153.4px;height:4.6px;background:#123c54;"></div>
<span class="t" style="left:648.00px;top:388.00px;font-size:19px;line-height:19px;color:#33383b;letter-spacing:0.651px;">App IDs</span>
<span class="t" style="left:763.60px;top:388.00px;font-size:19px;line-height:19px;color:#33383b;letter-spacing:0.493px;">FQDNs</span>
<span class="t" style="left:873.00px;top:388.00px;font-size:19px;line-height:19px;color:#33383b;letter-spacing:0.495px;">URL Categories</span>
<div class="a" style="left:453px;top:454px;width:234px;height:33.5px;border:1.4px solid #0e3f58;border-radius:4px;"></div>
<span class="t" style="left:471.30px;top:463.00px;font-size:15.5px;line-height:15.5px;color:#0e4059;letter-spacing:0.865px;-webkit-text-stroke:0.35px #0e4059;">ADD CONTEXT PROFILE</span>
<span class="t" style="left:2070.00px;top:462.00px;font-size:18px;line-height:18px;color:#14181b;letter-spacing:0.496px;">Filter by Name, Path and more</span>
<div class="a" style="left:2062.5px;top:488px;width:340px;height:1px;background:#0e1417;"></div>
<div class="a" style="left:2415px;top:463.5px;width:29px;height:1px;background:#0f1315;"></div>
<div class="a" style="left:2420px;top:469.5px;width:19px;height:1px;background:#0f1315;"></div>
<div class="a" style="left:2425px;top:475.5px;width:9px;height:1px;background:#0f1315;"></div>
<div class="a" style="left:454px;top:508px;width:1996px;height:1307px;background:#060809;border:1px solid #0b1317;border-radius:3px;"></div>
<div class="a" style="left:455px;top:509px;width:1994px;height:50px;background:#0a0d0f;"></div>
<div class="a" style="left:455px;top:558px;width:1994px;height:1px;background:#0c151a;"></div>
<div class="a" style="left:564.9px;top:517px;width:1px;height:34px;background:#151a1d;"></div>
<div class="a" style="left:849.3px;top:517px;width:1px;height:34px;background:#151a1d;"></div>
<div class="a" style="left:1075.9px;top:517px;width:1px;height:34px;background:#151a1d;"></div>
<div class="a" style="left:1593.2px;top:517px;width:1px;height:34px;background:#151a1d;"></div>
<div class="a" style="left:2052.7px;top:517px;width:1px;height:34px;background:#151a1d;"></div>
<div class="a" style="left:2201.3px;top:517px;width:1px;height:34px;background:#151a1d;"></div>
<span class="t" style="left:582.80px;top:526.00px;font-size:15.5px;line-height:15.5px;color:#3d4347;font-weight:700;letter-spacing:-0.073px;">Name</span>
<span class="t" style="left:867.50px;top:526.00px;font-size:15.5px;line-height:15.5px;color:#3d4347;font-weight:700;letter-spacing:0.422px;">Attributes</span>
<span class="t" style="left:1093.80px;top:526.00px;font-size:15.5px;line-height:15.5px;color:#3d4347;font-weight:700;letter-spacing:0.273px;">Description</span>
<span class="t" style="left:1611.30px;top:526.00px;font-size:15.5px;line-height:15.5px;color:#3d4347;font-weight:700;letter-spacing:0.323px;">Tags</span>
<span class="t" style="left:2070.30px;top:526.00px;font-size:15.5px;line-height:15.5px;color:#3d4347;font-weight:700;letter-spacing:0.534px;">Where Used</span>
<span class="t" style="left:2219.30px;top:526.00px;font-size:15.5px;line-height:15.5px;color:#3d4347;font-weight:700;letter-spacing:0.185px;">Status</span>
<div class="a" style="left:455px;top:559px;width:1974px;height:211px;background:#070c10;"></div>
<div class="a" style="left:454px;top:558.5px;width:5px;height:212px;background:#10344a;"></div>
<span class="t" style="left:586.90px;top:583.00px;font-size:17.5px;line-height:17.5px;color:#3a3f42;letter-spacing:1.047px;">debianrepo</span>
<div class="a" style="left:578.7px;top:605.5px;width:231.7px;height:1.2px;background:#30363a;"></div>
<span class="t" style="left:814.30px;top:576.00px;font-size:25px;line-height:25px;color:#6a3d1c;">*</span>
<span class="t" style="left:864.30px;top:580.00px;font-size:17.5px;line-height:17.5px;color:#10506e;letter-spacing:0.459px;">Set</span>
<span class="t" style="left:896.50px;top:575.00px;font-size:25px;line-height:25px;color:#6a3d1c;">*</span>
<div class="a" style="left:1091px;top:574px;width:485.3px;height:75px;background:#040608;border:1px solid #1a2024;"></div>
<span class="t" style="left:1100.40px;top:581.00px;font-size:17.5px;line-height:17.5px;color:#31363a;letter-spacing:0.845px;">Description</span>
<div class="a" style="left:1609.4px;top:574px;width:427px;height:35.6px;border:1.1px solid #0b2533;border-radius:18px;"></div>
<div class="a" style="left:1613.4px;top:578.4px;width:27.2px;height:27.2px;background:#2b4a53;border-radius:50%;"></div>
<svg class="a" style="left:1619px;top:584px;" width="16" height="16" viewBox="0 0 16 16"><path d="M2 3 V8 L9 15 L14 10 L7 3 Z" stroke="#2b5f59" stroke-width="1.1" fill="none"/><circle cx="5" cy="6" r="0.9" fill="#2b5f59"/></svg>
<span class="t" style="left:1661.60px;top:582.00px;font-size:17.5px;line-height:17.5px;color:#31363a;letter-spacing:1.541px;">Tag</span>
<div class="a" style="left:1650px;top:601.5px;width:162px;height:1px;background:#20282d;"></div>
<span class="t" style="left:1837.00px;top:582.00px;font-size:17.5px;line-height:17.5px;color:#31363a;letter-spacing:0.594px;">Scope</span>
<div class="a" style="left:1826px;top:601.5px;width:161.4px;height:1px;background:#20282d;"></div>
<div class="a" style="left:2004px;top:581px;width:22px;height:22px;background:#0b3146;border-radius:50%;"></div>
<svg class="a" style="left:2009px;top:586px;" width="12" height="12" viewBox="0 0 12 12"><path d="M6 0.5 V11.5 M0.5 6 H11.5" stroke="#06212f" stroke-width="1.6"/></svg>
<span class="t" style="left:1609.40px;top:619.00px;font-size:16px;line-height:16px;color:#181e22;letter-spacing:0.389px;">Max 30 allowed. Click (+) to add.</span>
<div class="a" style="left:455px;top:770px;width:1974px;height:1.2px;background:#0d1d25;"></div>
<span class="t" style="left:2071.00px;top:787.00px;font-size:18px;line-height:18px;color:#3a3e41;font-style:italic;transform:scaleX(1.12);transform-origin:left;">0</span>
<div class="a" style="left:2219.5px;top:786.9px;width:19.6px;height:19.6px;background:#1f3f08;border-radius:50%;"></div>
<span class="t" style="left:2250.00px;top:788.00px;font-size:17.5px;line-height:17.5px;color:#33383b;letter-spacing:0.260px;">Success</span>
<svg class="a" style="left:2325px;top:788px;" width="17" height="17" viewBox="0 0 17 17"><path d="M14.2 4.8 A7 7 0 1 0 15.6 9.5" stroke="#0d3e55" stroke-width="1.25" fill="none"/><path d="M15.8 0.8 V5.6 H11" stroke="#0d3e55" stroke-width="1.25" fill="none"/></svg>
<div class="a" style="left:455px;top:828.3px;width:1974px;height:1.2px;background:#0d1d25;"></div>
<span class="t" style="left:2071.00px;top:845.00px;font-size:18px;line-height:18px;color:#3a3e41;font-style:italic;transform:scaleX(1.12);transform-origin:left;">0</span>
<div class="a" style="left:2219.5px;top:845.1999999999999px;width:19.6px;height:19.6px;background:#1f3f08;border-radius:50%;"></div>
<span class="t" style="left:2250.00px;top:847.00px;font-size:17.5px;line-height:17.5px;color:#33383b;letter-spacing:0.260px;">Success</span>
<svg class="a" style="left:2325px;top:846.3px;" width="17" height="17" viewBox="0 0 17 17"><path d="M14.2 4.8 A7 7 0 1 0 15.6 9.5" stroke="#0d3e55" stroke-width="1.25" fill="none"/><path d="M15.8 0.8 V5.6 H11" stroke="#0d3e55" stroke-width="1.25" fill="none"/></svg>
<div class="a" style="left:455px;top:886.7px;width:1974px;height:1.2px;background:#0d1d25;"></div>
<span class="t" style="left:2071.00px;top:903.00px;font-size:18px;line-height:18px;color:#3a3e41;font-style:italic;transform:scaleX(1.12);transform-origin:left;">0</span>
<div class="a" style="left:2219.5px;top:903.6px;width:19.6px;height:19.6px;background:#1f3f08;border-radius:50%;"></div>
<span class="t" style="left:2250.00px;top:905.00px;font-size:17.5px;line-height:17.5px;color:#33383b;letter-spacing:0.260px;">Success</span>
<svg class="a" style="left:2325px;top:904.7px;" width="17" height="17" viewBox="0 0 17 17"><path d="M14.2 4.8 A7 7 0 1 0 15.6 9.5" stroke="#0d3e55" stroke-width="1.25" fill="none"/><path d="M15.8 0.8 V5.6 H11" stroke="#0d3e55" stroke-width="1.25" fill="none"/></svg>
<div class="a" style="left:455px;top:994.3px;width:1974px;height:1.2px;background:#0d1d25;"></div>
<span class="t" style="left:2071.00px;top:1011.00px;font-size:18px;line-height:18px;color:#3a3e41;font-style:italic;transform:scaleX(1.12);transform-origin:left;">0</span>
<div class="a" style="left:2219.5px;top:1011.1999999999999px;width:19.6px;height:19.6px;background:#1f3f08;border-radius:50%;"></div>
<span class="t" style="left:2250.00px;top:1013.00px;font-size:17.5px;line-height:17.5px;color:#33383b;letter-spacing:0.260px;">Success</span>
<svg class="a" style="left:2325px;top:1012.3px;" width="17" height="17" viewBox="0 0 17 17"><path d="M14.2 4.8 A7 7 0 1 0 15.6 9.5" stroke="#0d3e55" stroke-width="1.25" fill="none"/><path d="M15.8 0.8 V5.6 H11" stroke="#0d3e55" stroke-width="1.25" fill="none"/></svg>
<div class="a" style="left:455px;top:1063.3px;width:1974px;height:1.2px;background:#0d1d25;"></div>
<span class="t" style="left:2071.00px;top:1080.00px;font-size:18px;line-height:18px;color:#3a3e41;font-style:italic;transform:scaleX(1.12);transform-origin:left;">0</span>
<div class="a" style="left:2219.5px;top:1080.2px;width:19.6px;height:19.6px;background:#1f3f08;border-radius:50%;"></div>
<span class="t" style="left:2250.00px;top:1082.00px;font-size:17.5px;line-height:17.5px;color:#33383b;letter-spacing:0.260px;">Success</span>
<svg class="a" style="left:2325px;top:1081.3px;" width="17" height="17" viewBox="0 0 17 17"><path d="M14.2 4.8 A7 7 0 1 0 15.6 9.5" stroke="#0d3e55" stroke-width="1.25" fill="none"/><path d="M15.8 0.8 V5.6 H11" stroke="#0d3e55" stroke-width="1.25" fill="none"/></svg>
<div class="a" style="left:455px;top:1122.3px;width:1974px;height:1.2px;background:#0d1d25;"></div>
<span class="t" style="left:2071.00px;top:1139.00px;font-size:18px;line-height:18px;color:#3a3e41;font-style:italic;transform:scaleX(1.12);transform-origin:left;">0</span>
<div class="a" style="left:2219.5px;top:1139.2px;width:19.6px;height:19.6px;background:#1f3f08;border-radius:50%;"></div>
<span class="t" style="left:2250.00px;top:1141.00px;font-size:17.5px;line-height:17.5px;color:#33383b;letter-spacing:0.260px;">Success</span>
<svg class="a" style="left:2325px;top:1140.3px;" width="17" height="17" viewBox="0 0 17 17"><path d="M14.2 4.8 A7 7 0 1 0 15.6 9.5" stroke="#0d3e55" stroke-width="1.25" fill="none"/><path d="M15.8 0.8 V5.6 H11" stroke="#0d3e55" stroke-width="1.25" fill="none"/></svg>
<div class="a" style="left:455px;top:1180.7px;width:1974px;height:1.2px;background:#0d1d25;"></div>
<span class="t" style="left:2071.00px;top:1197.00px;font-size:18px;line-height:18px;color:#3a3e41;font-style:italic;transform:scaleX(1.12);transform-origin:left;">0</span>
<div class="a" style="left:2219.5px;top:1197.6000000000001px;width:19.6px;height:19.6px;background:#1f3f08;border-radius:50%;"></div>
<span class="t" style="left:2250.00px;top:1199.00px;font-size:17.5px;line-height:17.5px;color:#33383b;letter-spacing:0.260px;">Success</span>
<svg class="a" style="left:2325px;top:1198.7px;" width="17" height="17" viewBox="0 0 17 17"><path d="M14.2 4.8 A7 7 0 1 0 15.6 9.5" stroke="#0d3e55" stroke-width="1.25" fill="none"/><path d="M15.8 0.8 V5.6 H11" stroke="#0d3e55" stroke-width="1.25" fill="none"/></svg>
<div class="a" style="left:455px;top:1250px;width:1974px;height:1.2px;background:#0d1d25;"></div>
<span class="t" style="left:2071.00px;top:1267.00px;font-size:18px;line-height:18px;color:#3a3e41;font-style:italic;transform:scaleX(1.12);transform-origin:left;">0</span>
<div class="a" style="left:2219.5px;top:1266.9px;width:19.6px;height:19.6px;background:#1f3f08;border-radius:50%;"></div>
<span class="t" style="left:2250.00px;top:1268.00px;font-size:17.5px;line-height:17.5px;color:#33383b;letter-spacing:0.260px;">Success</span>
<svg class="a" style="left:2325px;top:1268px;" width="17" height="17" viewBox="0 0 17 17"><path d="M14.2 4.8 A7 7 0 1 0 15.6 9.5" stroke="#0d3e55" stroke-width="1.25" fill="none"/><path d="M15.8 0.8 V5.6 H11" stroke="#0d3e55" stroke-width="1.25" fill="none"/></svg>
<div class="a" style="left:455px;top:1309px;width:1974px;height:1.2px;background:#0d1d25;"></div>
<span class="t" style="left:2071.00px;top:1326.00px;font-size:18px;line-height:18px;color:#3a3e41;font-style:italic;transform:scaleX(1.12);transform-origin:left;">0</span>
<div class="a" style="left:2219.5px;top:1325.9px;width:19.6px;height:19.6px;background:#1f3f08;border-radius:50%;"></div>
<span class="t" style="left:2250.00px;top:1327.00px;font-size:17.5px;line-height:17.5px;color:#33383b;letter-spacing:0.260px;">Success</span>
<svg class="a" style="left:2325px;top:1327px;" width="17" height="17" viewBox="0 0 17 17"><path d="M14.2 4.8 A7 7 0 1 0 15.6 9.5" stroke="#0d3e55" stroke-width="1.25" fill="none"/><path d="M15.8 0.8 V5.6 H11" stroke="#0d3e55" stroke-width="1.25" fill="none"/></svg>
<div class="a" style="left:455px;top:1396.7px;width:1974px;height:1.2px;background:#0d1d25;"></div>
<span class="t" style="left:2071.00px;top:1413.00px;font-size:18px;line-height:18px;color:#3a3e41;font-style:italic;transform:scaleX(1.12);transform-origin:left;">0</span>
<div class="a" style="left:2219.5px;top:1413.6000000000001px;width:19.6px;height:19.6px;background:#1f3f08;border-radius:50%;"></div>
<span class="t" style="left:2250.00px;top:1415.00px;font-size:17.5px;line-height:17.5px;color:#33383b;letter-spacing:0.260px;">Success</span>
<svg class="a" style="left:2325px;top:1414.7px;" width="17" height="17" viewBox="0 0 17 17"><path d="M14.2 4.8 A7 7 0 1 0 15.6 9.5" stroke="#0d3e55" stroke-width="1.25" fill="none"/><path d="M15.8 0.8 V5.6 H11" stroke="#0d3e55" stroke-width="1.25" fill="none"/></svg>
<div class="a" style="left:455px;top:1466.7px;width:1974px;height:1.2px;background:#0d1d25;"></div>
<span class="t" style="left:2071.00px;top:1483.00px;font-size:18px;line-height:18px;color:#3a3e41;font-style:italic;transform:scaleX(1.12);transform-origin:left;">0</span>
<div class="a" style="left:2219.5px;top:1483.6000000000001px;width:19.6px;height:19.6px;background:#1f3f08;border-radius:50%;"></div>
<span class="t" style="left:2250.00px;top:1485.00px;font-size:17.5px;line-height:17.5px;color:#33383b;letter-spacing:0.260px;">Success</span>
<svg class="a" style="left:2325px;top:1484.7px;" width="17" height="17" viewBox="0 0 17 17"><path d="M14.2 4.8 A7 7 0 1 0 15.6 9.5" stroke="#0d3e55" stroke-width="1.25" fill="none"/><path d="M15.8 0.8 V5.6 H11" stroke="#0d3e55" stroke-width="1.25" fill="none"/></svg>
<div class="a" style="left:455px;top:1593.3px;width:1974px;height:1.2px;background:#0d1d25;"></div>
<span class="t" style="left:2071.00px;top:1610.00px;font-size:18px;line-height:18px;color:#3a3e41;font-style:italic;transform:scaleX(1.12);transform-origin:left;">0</span>
<div class="a" style="left:2219.5px;top:1610.2px;width:19.6px;height:19.6px;background:#1f3f08;border-radius:50%;"></div>
<span class="t" style="left:2250.00px;top:1612.00px;font-size:17.5px;line-height:17.5px;color:#33383b;letter-spacing:0.260px;">Success</span>
<svg class="a" style="left:2325px;top:1611.3px;" width="17" height="17" viewBox="0 0 17 17"><path d="M14.2 4.8 A7 7 0 1 0 15.6 9.5" stroke="#0d3e55" stroke-width="1.25" fill="none"/><path d="M15.8 0.8 V5.6 H11" stroke="#0d3e55" stroke-width="1.25" fill="none"/></svg>
<div class="a" style="left:455px;top:1652px;width:1974px;height:1.2px;background:#0d1d25;"></div>
<span class="t" style="left:2071.00px;top:1669.00px;font-size:18px;line-height:18px;color:#3a3e41;font-style:italic;transform:scaleX(1.12);transform-origin:left;">0</span>
<div class="a" style="left:2219.5px;top:1668.9px;width:19.6px;height:19.6px;background:#1f3f08;border-radius:50%;"></div>
<span class="t" style="left:2250.00px;top:1670.00px;font-size:17.5px;line-height:17.5px;color:#33383b;letter-spacing:0.260px;">Success</span>
<svg class="a" style="left:2325px;top:1670px;" width="17" height="17" viewBox="0 0 17 17"><path d="M14.2 4.8 A7 7 0 1 0 15.6 9.5" stroke="#0d3e55" stroke-width="1.25" fill="none"/><path d="M15.8 0.8 V5.6 H11" stroke="#0d3e55" stroke-width="1.25" fill="none"/></svg>
<div class="a" style="left:455px;top:1710.3px;width:1974px;height:1.2px;background:#0d1d25;"></div>
<span class="t" style="left:2071.00px;top:1727.00px;font-size:18px;line-height:18px;color:#3a3e41;font-style:italic;transform:scaleX(1.12);transform-origin:left;">0</span>
<div class="a" style="left:2219.5px;top:1727.2px;width:19.6px;height:19.6px;background:#1f3f08;border-radius:50%;"></div>
<span class="t" style="left:2250.00px;top:1729.00px;font-size:17.5px;line-height:17.5px;color:#33383b;letter-spacing:0.260px;">Success</span>
<svg class="a" style="left:2325px;top:1728.3px;" width="17" height="17" viewBox="0 0 17 17"><path d="M14.2 4.8 A7 7 0 1 0 15.6 9.5" stroke="#0d3e55" stroke-width="1.25" fill="none"/><path d="M15.8 0.8 V5.6 H11" stroke="#0d3e55" stroke-width="1.25" fill="none"/></svg>
<div class="a" style="left:455px;top:1765.2px;width:1994px;height:1px;background:#0d1d25;"></div>
<svg class="a" style="left:480px;top:1323.2px;" width="12" height="26" viewBox="0 0 12 26"><g fill="#0e4058"><circle cx="5.8" cy="4.6" r="1.9"/><circle cx="5.8" cy="12.6" r="1.9"/><circle cx="5.8" cy="20.5" r="1.9"/></g></svg>
<span class="t" style="left:1091.00px;top:1346.00px;font-size:17.5px;line-height:17.5px;color:#33383b;letter-spacing:0.860px;">which certifies the ownership of a public key for</span>
<span class="t" style="left:1091.00px;top:1364.00px;font-size:17.5px;line-height:17.5px;color:#33383b;letter-spacing:0.904px;">message encryption</span>
<svg class="a" style="left:480px;top:1411.7px;" width="12" height="26" viewBox="0 0 12 26"><g fill="#0e4058"><circle cx="5.8" cy="4.6" r="1.9"/><circle cx="5.8" cy="12.6" r="1.9"/><circle cx="5.8" cy="20.5" r="1.9"/></g></svg>
<svg class="a" style="left:522px;top:1413.2px;" width="22" height="23" viewBox="0 0 22 23"><g stroke="#0e4a58" stroke-width="1.15" fill="none" stroke-linejoin="round"><path d="M17 8.5 V1.5 Q17 0.8 16.3 0.8 H1.5 Q0.8 0.8 0.8 1.5 V19 Q0.8 19.7 1.5 19.7 H8"/><path d="M21.87 15.60 L21.87 16.80 L20.20 17.54 L19.86 18.37 L20.52 20.07 L19.67 20.92 L17.97 20.26 L17.14 20.60 L16.40 22.27 L15.20 22.27 L14.46 20.60 L13.63 20.26 L11.93 20.92 L11.08 20.07 L11.74 18.37 L11.40 17.54 L9.73 16.80 L9.73 15.60 L11.40 14.86 L11.74 14.03 L11.08 12.33 L11.93 11.48 L13.63 12.14 L14.46 11.80 L15.20 10.13 L16.40 10.13 L17.14 11.80 L17.97 12.14 L19.67 11.48 L20.52 12.33 L19.86 14.03 L20.20 14.86 Z"/><circle cx="15.8" cy="16.2" r="2"/></g></svg>
<svg class="a" style="left:582px;top:1414.2px;" width="15" height="20" viewBox="0 0 15 20"><g stroke="#383d40" stroke-width="1.15" fill="none"><rect x="1" y="8.5" width="13" height="10.5" rx="1"/><path d="M3.5 8.5 V5 A4 4 0 0 1 11.5 5 V8.5"/></g><path d="M7.5 12 V15.5" stroke="#383d40" stroke-width="1.5"/></svg>
<span class="t" style="left:606.10px;top:1415.00px;font-size:17.5px;line-height:17.5px;color:#383d40;letter-spacing:-1.192px;">CIFS</span>
<span class="t" style="left:864.20px;top:1414.00px;font-size:17.5px;line-height:17.5px;color:#0d3e55;letter-spacing:-1.092px;">CIFS</span>
<span class="t" style="left:1091.00px;top:1414.00px;font-size:17.5px;line-height:17.5px;color:#33383b;letter-spacing:0.618px;">CIFS (Common Internet File System) is used to provide</span>
<span class="t" style="left:1091.00px;top:1433.00px;font-size:17.5px;line-height:17.5px;color:#33383b;letter-spacing:0.730px;">shared access to directories</span>
<span class="t" style="left:1610.70px;top:1417.00px;font-size:18px;line-height:18px;color:#3a3e41;font-style:italic;transform:scaleX(1.12);transform-origin:left;">0</span>
<svg class="a" style="left:480px;top:1481.7px;" width="12" height="26" viewBox="0 0 12 26"><g fill="#0e4058"><circle cx="5.8" cy="4.6" r="1.9"/><circle cx="5.8" cy="12.6" r="1.9"/><circle cx="5.8" cy="20.5" r="1.9"/></g></svg>
<svg class="a" style="left:522px;top:1483.2px;" width="22" height="23" viewBox="0 0 22 23"><g stroke="#0e4a58" stroke-width="1.15" fill="none" stroke-linejoin="round"><path d="M17 8.5 V1.5 Q17 0.8 16.3 0.8 H1.5 Q0.8 0.8 0.8 1.5 V19 Q0.8 19.7 1.5 19.7 H8"/><path d="M21.87 15.60 L21.87 16.80 L20.20 17.54 L19.86 18.37 L20.52 20.07 L19.67 20.92 L17.97 20.26 L17.14 20.60 L16.40 22.27 L15.20 22.27 L14.46 20.60 L13.63 20.26 L11.93 20.92 L11.08 20.07 L11.74 18.37 L11.40 17.54 L9.73 16.80 L9.73 15.60 L11.40 14.86 L11.74 14.03 L11.08 12.33 L11.93 11.48 L13.63 12.14 L14.46 11.80 L15.20 10.13 L16.40 10.13 L17.14 11.80 L17.97 12.14 L19.67 11.48 L20.52 12.33 L19.86 14.03 L20.20 14.86 Z"/><circle cx="15.8" cy="16.2" r="2"/></g></svg>
<svg class="a" style="left:582px;top:1484.2px;" width="15" height="20" viewBox="0 0 15 20"><g stroke="#383d40" stroke-width="1.15" fill="none"><rect x="1" y="8.5" width="13" height="10.5" rx="1"/><path d="M3.5 8.5 V5 A4 4 0 0 1 11.5 5 V8.5"/></g><path d="M7.5 12 V15.5" stroke="#383d40" stroke-width="1.5"/></svg>
<span class="t" style="left:606.10px;top:1485.00px;font-size:17.5px;line-height:17.5px;color:#383d40;letter-spacing:0.035px;">CLDAP</span>
<span class="t" style="left:864.20px;top:1484.00px;font-size:17.5px;line-height:17.5px;color:#0d3e55;letter-spacing:0.160px;">CLDAP</span>
<span class="t" style="left:1091.00px;top:1484.00px;font-size:17.5px;line-height:17.5px;color:#33383b;letter-spacing:0.788px;">The Connectionless Lightweight Directory Access</span>
<span class="t" style="left:1091.00px;top:1503.00px;font-size:17.5px;line-height:17.5px;color:#33383b;letter-spacing:0.677px;">Protocol (CLDAP) is an application protocol for accessing</span>
<span class="t" style="left:1091.00px;top:1522.00px;font-size:17.5px;line-height:17.5px;color:#33383b;letter-spacing:0.870px;">and maintaining distributed directory information</span>
<span class="t" style="left:1091.00px;top:1541.00px;font-size:17.5px;line-height:17.5px;color:#33383b;letter-spacing:0.700px;">services over an Internet Protocol (IP) network using</span>
<span class="t" style="left:1091.00px;top:1561.00px;font-size:17.5px;line-height:17.5px;color:#33383b;letter-spacing:0.646px;">UDP.</span>
<span class="t" style="left:1610.70px;top:1487.00px;font-size:18px;line-height:18px;color:#3a3e41;font-style:italic;transform:scaleX(1.12);transform-origin:left;">0</span>
<svg class="a" style="left:480px;top:1608.3px;" width="12" height="26" viewBox="0 0 12 26"><g fill="#0e4058"><circle cx="5.8" cy="4.6" r="1.9"/><circle cx="5.8" cy="12.6" r="1.9"/><circle cx="5.8" cy="20.5" r="1.9"/></g></svg>
<svg class="a" style="left:522px;top:1609.8px;" width="22" height="23" viewBox="0 0 22 23"><g stroke="#0e4a58" stroke-width="1.15" fill="none" stroke-linejoin="round"><path d="M17 8.5 V1.5 Q17 0.8 16.3 0.8 H1.5 Q0.8 0.8 0.8 1.5 V19 Q0.8 19.7 1.5 19.7 H8"/><path d="M21.87 15.60 L21.87 16.80 L20.20 17.54 L19.86 18.37 L20.52 20.07 L19.67 20.92 L17.97 20.26 L17.14 20.60 L16.40 22.27 L15.20 22.27 L14.46 20.60 L13.63 20.26 L11.93 20.92 L11.08 20.07 L11.74 18.37 L11.40 17.54 L9.73 16.80 L9.73 15.60 L11.40 14.86 L11.74 14.03 L11.08 12.33 L11.93 11.48 L13.63 12.14 L14.46 11.80 L15.20 10.13 L16.40 10.13 L17.14 11.80 L17.97 12.14 L19.67 11.48 L20.52 12.33 L19.86 14.03 L20.20 14.86 Z"/><circle cx="15.8" cy="16.2" r="2"/></g></svg>
<svg class="a" style="left:582px;top:1610.8px;" width="15" height="20" viewBox="0 0 15 20"><g stroke="#383d40" stroke-width="1.15" fill="none"><rect x="1" y="8.5" width="13" height="10.5" rx="1"/><path d="M3.5 8.5 V5 A4 4 0 0 1 11.5 5 V8.5"/></g><path d="M7.5 12 V15.5" stroke="#383d40" stroke-width="1.5"/></svg>
<span class="t" style="left:606.10px;top:1612.00px;font-size:17.5px;line-height:17.5px;color:#383d40;letter-spacing:-0.594px;">CTRXCGP</span>
<span class="t" style="left:864.20px;top:1611.00px;font-size:17.5px;line-height:17.5px;color:#0d3e55;letter-spacing:-0.427px;">CTRXCGP</span>
<span class="t" style="left:1091.00px;top:1611.00px;font-size:17.5px;line-height:17.5px;color:#33383b;letter-spacing:0.748px;">Citrix Common Gateway Protocol.</span>
<span class="t" style="left:1610.70px;top:1613.00px;font-size:18px;line-height:18px;color:#3a3e41;font-style:italic;transform:scaleX(1.12);transform-origin:left;">0</span>
<svg class="a" style="left:480px;top:1667px;" width="12" height="26" viewBox="0 0 12 26"><g fill="#0e4058"><circle cx="5.8" cy="4.6" r="1.9"/><circle cx="5.8" cy="12.6" r="1.9"/><circle cx="5.8" cy="20.5" r="1.9"/></g></svg>
<svg class="a" style="left:522px;top:1668.5px;" width="22" height="23" viewBox="0 0 22 23"><g stroke="#0e4a58" stroke-width="1.15" fill="none" stroke-linejoin="round"><path d="M17 8.5 V1.5 Q17 0.8 16.3 0.8 H1.5 Q0.8 0.8 0.8 1.5 V19 Q0.8 19.7 1.5 19.7 H8"/><path d="M21.87 15.60 L21.87 16.80 L20.20 17.54 L19.86 18.37 L20.52 20.07 L19.67 20.92 L17.97 20.26 L17.14 20.60 L16.40 22.27 L15.20 22.27 L14.46 20.60 L13.63 20.26 L11.93 20.92 L11.08 20.07 L11.74 18.37 L11.40 17.54 L9.73 16.80 L9.73 15.60 L11.40 14.86 L11.74 14.03 L11.08 12.33 L11.93 11.48 L13.63 12.14 L14.46 11.80 L15.20 10.13 L16.40 10.13 L17.14 11.80 L17.97 12.14 L19.67 11.48 L20.52 12.33 L19.86 14.03 L20.20 14.86 Z"/><circle cx="15.8" cy="16.2" r="2"/></g></svg>
<svg class="a" style="left:582px;top:1669.5px;" width="15" height="20" viewBox="0 0 15 20"><g stroke="#383d40" stroke-width="1.15" fill="none"><rect x="1" y="8.5" width="13" height="10.5" rx="1"/><path d="M3.5 8.5 V5 A4 4 0 0 1 11.5 5 V8.5"/></g><path d="M7.5 12 V15.5" stroke="#383d40" stroke-width="1.5"/></svg>
<span class="t" style="left:606.10px;top:1671.00px;font-size:17.5px;line-height:17.5px;color:#383d40;letter-spacing:-0.266px;">CTRXGOTO</span>
<span class="t" style="left:864.20px;top:1670.00px;font-size:17.5px;line-height:17.5px;color:#0d3e55;letter-spacing:-0.123px;">CTRXGOTO</span>
<span class="t" style="left:1091.00px;top:1670.00px;font-size:17.5px;line-height:17.5px;color:#33383b;letter-spacing:0.800px;">Hosting Citrix GoToMeeting</span>
<span class="t" style="left:1610.70px;top:1672.00px;font-size:18px;line-height:18px;color:#3a3e41;font-style:italic;transform:scaleX(1.12);transform-origin:left;">0</span>
<svg class="a" style="left:480px;top:1725.3px;" width="12" height="26" viewBox="0 0 12 26"><g fill="#0e4058"><circle cx="5.8" cy="4.6" r="1.9"/><circle cx="5.8" cy="12.6" r="1.9"/><circle cx="5.8" cy="20.5" r="1.9"/></g></svg>
<svg class="a" style="left:522px;top:1726.8px;" width="22" height="23" viewBox="0 0 22 23"><g stroke="#0e4a58" stroke-width="1.15" fill="none" stroke-linejoin="round"><path d="M17 8.5 V1.5 Q17 0.8 16.3 0.8 H1.5 Q0.8 0.8 0.8 1.5 V19 Q0.8 19.7 1.5 19.7 H8"/><path d="M21.87 15.60 L21.87 16.80 L20.20 17.54 L19.86 18.37 L20.52 20.07 L19.67 20.92 L17.97 20.26 L17.14 20.60 L16.40 22.27 L15.20 22.27 L14.46 20.60 L13.63 20.26 L11.93 20.92 L11.08 20.07 L11.74 18.37 L11.40 17.54 L9.73 16.80 L9.73 15.60 L11.40 14.86 L11.74 14.03 L11.08 12.33 L11.93 11.48 L13.63 12.14 L14.46 11.80 L15.20 10.13 L16.40 10.13 L17.14 11.80 L17.97 12.14 L19.67 11.48 L20.52 12.33 L19.86 14.03 L20.20 14.86 Z"/><circle cx="15.8" cy="16.2" r="2"/></g></svg>
<svg class="a" style="left:582px;top:1727.8px;" width="15" height="20" viewBox="0 0 15 20"><g stroke="#383d40" stroke-width="1.15" fill="none"><rect x="1" y="8.5" width="13" height="10.5" rx="1"/><path d="M3.5 8.5 V5 A4 4 0 0 1 11.5 5 V8.5"/></g><path d="M7.5 12 V15.5" stroke="#383d40" stroke-width="1.5"/></svg>
<span class="t" style="left:606.10px;top:1729.00px;font-size:17.5px;line-height:17.5px;color:#383d40;letter-spacing:-0.302px;">CTRXICA</span>
<span class="t" style="left:864.20px;top:1728.00px;font-size:17.5px;line-height:17.5px;color:#0d3e55;letter-spacing:-0.135px;">CTRXICA</span>
<span class="t" style="left:1091.00px;top:1728.00px;font-size:17.5px;line-height:17.5px;color:#33383b;letter-spacing:0.820px;">ICA (Independent Computing Architecture) is a</span>
<span class="t" style="left:1091.00px;top:1747.00px;font-size:17.5px;line-height:17.5px;color:#33383b;letter-spacing:0.891px;">proprietary protocol for an application server system</span>
<span class="t" style="left:1610.70px;top:1730.00px;font-size:18px;line-height:18px;color:#3a3e41;font-style:italic;transform:scaleX(1.12);transform-origin:left;">0</span>
<div class="a" style="left:2429px;top:509px;width:21px;height:1256.5px;background:#4f4f4f;"></div>
<div class="a" style="left:2434.8px;top:513.4px;width:11px;height:395px;background:#3c3c3c;border-radius:5.5px;"></div>
<div class="a" style="left:455px;top:1766px;width:1994px;height:48.5px;background:#090b0c;"></div>
<svg class="a" style="left:472px;top:1780.5px;" width="18" height="18" viewBox="0 0 18 18"><path d="M15.5 5.5 A7.5 7.5 0 1 0 16.5 10" stroke="#0b2430" stroke-width="1.3" fill="none"/><path d="M16.5 1.5 V6 H12" stroke="#0b2430" stroke-width="1.3" fill="none"/></svg>
<span class="t" style="left:497.50px;top:1784.00px;font-size:14.6px;line-height:14.6px;color:#0b2430;letter-spacing:-0.506px;">REFRESH</span>
<svg class="a" style="left:2082px;top:1783px;" width="13" height="14" viewBox="0 0 13 14"><path d="M1 0.5 V13.5 M12 1 L5 7 L12 13" stroke="#1e2326" stroke-width="1.5" fill="none"/></svg>
<svg class="a" style="left:2120px;top:1783px;" width="9" height="14" viewBox="0 0 9 14"><path d="M8 1 L1.5 7 L8 13" stroke="#1e2326" stroke-width="1.5" fill="none"/></svg>
<div class="a" style="left:2149.5px;top:1775.5px;width:31px;height:30px;border:1px solid #101518;border-radius:3px;"></div>
<span class="t" style="left:2160.50px;top:1781.00px;font-size:16.5px;line-height:16.5px;color:#24292c;">1</span>
<span class="t" style="left:2186.00px;top:1781.00px;font-size:16.5px;line-height:16.5px;color:#24292c;letter-spacing:2.070px;">/ 2</span>
<svg class="a" style="left:2232px;top:1783px;" width="9" height="14" viewBox="0 0 9 14"><path d="M1 1 L7.5 7 L1 13" stroke="#1e2326" stroke-width="1.5" fill="none"/></svg>
<svg class="a" style="left:2266px;top:1783px;" width="13" height="14" viewBox="0 0 13 14"><path d="M12 0.5 V13.5 M1 1 L8 7 L1 13" stroke="#1e2326" stroke-width="1.5" fill="none"/></svg>
<span class="t" style="left:2308.50px;top:1782.00px;font-size:16px;line-height:16px;color:#23282b;letter-spacing:0.051px;">1 - 50 of 66 items</span>
<div class="a" style="left:465px;top:620.5px;width:1566px;height:700px;background:#0d181d;border-radius:9px;filter:blur(3.2px)"></div>
<div class="a" style="left:474px;top:628px;width:1548px;height:683px;background:#0d181d;border-radius:4px"></div>
<div class="a" style="left:496px;top:652.4px;width:1568px;height:703.3000000000001px;background:#21333b;border-radius:4px;"></div>
<span class="t" style="left:537.50px;top:693.00px;font-size:30px;line-height:30px;color:#eef1f3;letter-spacing:1.183px;">Add FQDN</span>
<svg class="a" style="left:2001.5px;top:699.5px;" width="19" height="19" viewBox="0 0 19 19"><path d="M1 1 L18 18 M18 1 L1 18" stroke="#d5dde2" stroke-width="1.7" fill="none"/></svg>
<div class="a" style="left:537.5px;top:788.0px;width:1486px;height:449.6px;background:#21333b;border:1.2px solid #50606b;border-radius:2.5px;"></div>
<div class="a" style="left:538.7px;top:789.2px;width:1483.6px;height:49.4px;background:#1c2a32;border-radius:1.5px 1.5px 0 0;"></div>
<div class="a" style="left:538.7px;top:838.2px;width:1483.6px;height:1.2px;background:#4a5a65;"></div>
<div class="a" style="left:592.6px;top:797px;width:1.2px;height:34px;background:#51616c;"></div>
<div class="a" style="left:1192.2px;top:797px;width:1.2px;height:34px;background:#51616c;"></div>
<div class="a" style="left:1607.0px;top:797px;width:1.2px;height:34px;background:#51616c;"></div>
<span class="t" style="left:610.40px;top:807.00px;font-size:15.5px;line-height:15.5px;color:#d0d7dc;font-weight:700;letter-spacing:0.331px;">Domain</span>
<span class="t" style="left:1210.00px;top:807.00px;font-size:15.5px;line-height:15.5px;color:#d0d7dc;font-weight:700;letter-spacing:0.406px;">Created By</span>
<span class="t" style="left:1624.00px;top:807.00px;font-size:15.5px;line-height:15.5px;color:#d0d7dc;font-weight:700;letter-spacing:0.534px;">Where Used</span>
<div class="a" style="left:538.7px;top:839.4px;width:1483.6px;height:62.5px;background:#29404d;"></div>
<div class="a" style="left:538.7px;top:901.7px;width:1483.6px;height:1.2px;background:#4a5a65;"></div>
<div class="a" style="left:537.5px;top:839.4px;width:4.8px;height:62.5px;background:#4aaed9;"></div>
<span class="t" style="left:622.50px;top:863.00px;font-size:17.5px;line-height:17.5px;color:#e4e9ec;letter-spacing:0.901px;">deb.debian.org</span>
<div class="a" style="left:614.3px;top:885.3px;width:544.2px;height:1.4px;background:#b4c0c8;"></div>
<span class="t" style="left:1162.30px;top:856.00px;font-size:25px;line-height:25px;color:#e8392c;">*</span>
<span class="t" style="left:1212.30px;top:856.00px;font-size:17.5px;line-height:17.5px;color:#c3ccd2;letter-spacing:0.682px;">User</span>
<div class="a" style="left:1799.4px;top:1267px;width:113.4px;height:50px;border:1.5px solid #4aaed9;border-radius:4px;"></div>
<span class="t" style="left:1817.00px;top:1286.00px;font-size:15.7px;line-height:15.7px;color:#4aaed9;letter-spacing:2.472px;-webkit-text-stroke:0.55px #4aaed9;">CANCEL</span>
<div class="a" style="left:1929px;top:1267px;width:98.3px;height:50px;background:#4aaed9;border-radius:4px;"></div>
<span class="t" style="left:1953.00px;top:1286.00px;font-size:15.7px;line-height:15.7px;color:#000;letter-spacing:2.766px;-webkit-text-stroke:0.6px #000;">SAVE</span>
</div></div>
</body></html>
